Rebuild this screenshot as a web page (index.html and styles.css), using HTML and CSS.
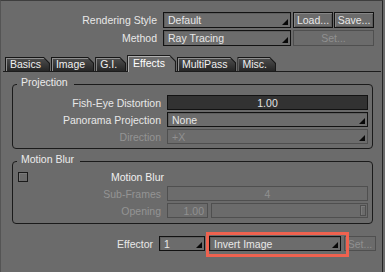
FILE: index.html
```html
<!DOCTYPE html>
<html>
<head>
<meta charset="utf-8">
<link rel="stylesheet" href="styles.css">
</head>
<body>
<div class="frame">
  <div class="top">
    <div class="row">
      <span class="lbl top-lbl">Rendering Style</span>
      <div class="field dd top-dd">Default<i class="tri"></i></div>
      <div class="btn">Load...</div>
      <div class="btn">Save...</div>
    </div>
    <div class="row">
      <span class="lbl top-lbl">Method</span>
      <div class="field dd top-dd">Ray Tracing<i class="tri"></i></div>
      <div class="btn off wide">Set...</div>
    </div>
  </div>

  <div class="tabs">
    <div class="tab"><span class="tab-in">Basics</span></div>
    <div class="tab"><span class="tab-in">Image</span></div>
    <div class="tab"><span class="tab-in">G.I.</span></div>
    <div class="tab active"><span class="tab-in">Effects</span></div>
    <div class="tab"><span class="tab-in">MultiPass</span></div>
    <div class="tab"><span class="tab-in">Misc.</span></div>
  </div>

  <div class="group g1">
    <span class="legend">Projection</span>
    <div class="grows first-gap">
      <div class="row grow">
        <span class="lbl glbl">Fish-Eye Distortion</span>
        <div class="field num">1.00</div>
      </div>
      <div class="row grow">
        <span class="lbl glbl">Panorama Projection</span>
        <div class="field dd gdd">None<i class="tri"></i></div>
      </div>
      <div class="row grow">
        <span class="lbl glbl dis">Direction</span>
        <div class="field dd gdd off">+X<i class="tri"></i></div>
      </div>
    </div>
  </div>

  <div class="group g2">
    <span class="legend">Motion Blur</span>
    <div class="grows second-gap">
      <div class="row grow">
        <span class="cb"></span>
        <span class="lbl cblbl">Motion Blur</span>
      </div>
      <div class="row grow">
        <span class="lbl glbl dis">Sub-Frames</span>
        <div class="field gdd off center">4</div>
      </div>
      <div class="row grow">
        <span class="lbl glbl dis">Opening</span>
        <div class="field off short">1.00</div>
        <div class="slider"><span class="thumb"></span></div>
      </div>
    </div>
  </div>

  <div class="row eff">
    <span class="lbl efflbl">Effector</span>
    <div class="field dd effnum">1<i class="tri"></i></div>
    <div class="field dd effdd">Invert Image<i class="tri"></i><span class="hl"></span></div>
    <div class="btn off effset">Set...</div>
  </div>
</div>
</body>
</html>
```

FILE: styles.css
```css
body {
  margin: 0;
  background: #6b6b6b;
  font-family: "Liberation Sans", Arial, sans-serif;
  font-size: 10.5px;
  color: #e8e8e8;
}

.frame {
  width: 383px;
  height: 272px;
  box-sizing: border-box;
  border-top: 1px solid #3e3e3e;
  border-left: 1px solid #545454;
  border-right: 1px solid #242424;
  padding-top: 11px;
}

.row {
  display: flex;
  align-items: center;
  height: 16px;
}

.row + .row {
  margin-top: 2px;
}

.lbl {
  text-align: right;
  white-space: nowrap;
  line-height: 14px;
}

.top-lbl {
  width: 156px;
  margin-right: 6px;
}

.field {
  box-sizing: border-box;
  height: 100%;
  border: 1px solid #121212;
  display: flex;
  align-items: center;
  padding-left: 4px;
  background: #6c6c6c;
  white-space: nowrap;
  box-shadow: inset 1px 1px 0 #5e5e5e;
}

.dd {
  position: relative;
}

.top-dd {
  width: 128px;
}

.tri {
  display: block;
  width: 0;
  height: 0;
  margin: 0 2px 2px auto;
  align-self: flex-end;
  border-left: 6px solid transparent;
  border-bottom: 6px solid #080808;
}

.btn {
  box-sizing: border-box;
  height: 100%;
  width: 40px;
  margin-left: 2px;
  border: 1px solid #121212;
  box-shadow: inset 1px 1px 0 #858585, inset -1px -1px 0 #5a5a5a;
  display: flex;
  align-items: center;
  justify-content: center;
  white-space: nowrap;
}

.btn + .btn {
  margin-left: 1px;
}

.wide {
  width: 81px;
}

.off {
  border-color: #4f4f4f;
  color: #909090;
  box-shadow: none;
}

.off .tri {
  border-bottom-color: #0a0a0a;
}

.dis {
  color: #949494;
}

/* tabs */
.tabs {
  display: flex;
  align-items: flex-end;
  gap: 1px;
  height: 16px;
  margin: 9px 1px 0 2px;
  padding-left: 2px;
  border-bottom: 1px solid #1c1c1c;
}

.tab {
  height: 14px;
  background: #161616;
  clip-path: polygon(0 0, calc(100% - 6px) 0, 100% 6px, 100% 100%, 0 100%);
  display: flex;
}

.tab-in {
  flex: 1;
  margin: 1px 1px 0 1px;
  padding: 0 8px 0 4px;
  background: linear-gradient(#4e4e4e, #262626);
  box-shadow: inset 1px 1px 0 #8e8e8e;
  clip-path: polygon(0 0, calc(100% - 5.5px) 0, 100% 5.5px, 100% 100%, 0 100%);
  color: #f0f0f0;
  line-height: 13px;
  white-space: nowrap;
}

.tab.active {
  height: 17px;
  margin-bottom: -1px;
  background: #1a1a1a;
}

.tab.active .tab-in {
  background: #6b6b6b;
  box-shadow: inset 1px 1px 0 #b0b0b0;
  padding: 0 10px 0 5px;
  line-height: 14px;
  color: #ffffff;
}

/* groups */
.group {
  margin: 12px 9px 0 11px;
  border: 1px solid #1a1a1a;
  border-radius: 4px;
  padding: 0 4px 4px 0;
}

.g2 {
  padding-bottom: 5px;
}

.legend {
  display: block;
  width: max-content;
  height: 13px;
  line-height: 13px;
  margin: -9px 0 0 4px;
  padding: 0 6px 0 4px;
  background: #6b6b6b;
  color: #ececec;
}

.first-gap {
  margin-top: 6px;
}

.second-gap {
  margin-top: 3px;
}

.grow {
  height: 15px;
}

.glbl {
  width: 148px;
  margin-right: 6px;
}

.num {
  width: 201px;
  background: #323232;
  justify-content: center;
  padding: 0;
  box-shadow: none;
  color: #e4e4e4;
}

.gdd {
  width: 201px;
}

.center {
  justify-content: center;
  padding: 0;
}

.cb {
  box-sizing: border-box;
  width: 10px;
  height: 10px;
  margin-left: 5px;
  border: 1px solid #1a1a1a;
  box-shadow: inset 1px 1px 0 #7a7a7a;
}

.cblbl {
  width: 136px;
  color: #f0f0f0;
}

.short {
  width: 41px;
  justify-content: flex-end;
  padding: 0 3px 0 0;
}

.slider {
  box-sizing: border-box;
  width: 157px;
  height: 100%;
  margin-left: 3px;
  border: 1px solid #4f4f4f;
  display: flex;
  justify-content: flex-end;
  padding: 1px;
}

.thumb {
  box-sizing: border-box;
  width: 6px;
  height: 100%;
  border: 1px solid #4f4f4f;
  box-shadow: inset 1px 1px 0 #7a7a7a;
}

/* effector */
.eff {
  margin-top: 12px;
  height: 15px;
}

.efflbl {
  width: 152px;
  margin-right: 6px;
}

.effnum {
  width: 46px;
}

.effdd {
  width: 132px;
  margin-left: 4px;
}

.effset {
  width: 32px;
  margin-left: 3px;
}

.hl {
  position: absolute;
  left: -4px;
  top: -5px;
  right: -9px;
  bottom: -7px;
  border: 3px solid #ef624f;
  pointer-events: none;
  z-index: 2;
}
```
